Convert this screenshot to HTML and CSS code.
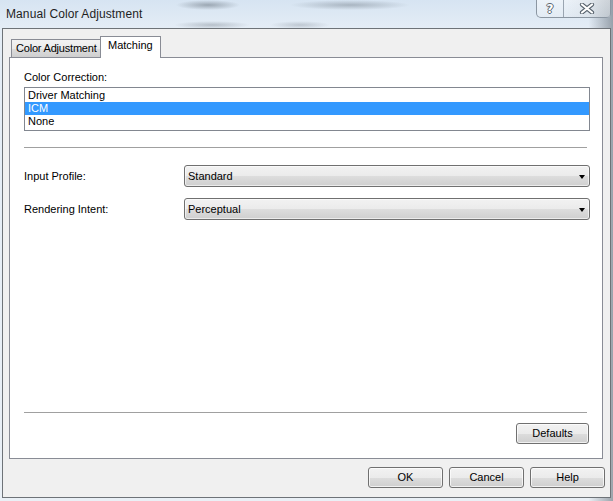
FILE: index.html
```html
<!DOCTYPE html>
<html>
<head>
<meta charset="utf-8">
<link rel="stylesheet" href="styles.css">
</head>
<body>
<div class="window">
  <div class="titlebar">
    <span class="title">Manual Color Adjustment</span>
    <div class="caption-buttons">
      <div class="cap cap-help"><span class="qmark">?</span></div>
      <div class="cap cap-close">
        <svg width="16" height="11" viewBox="0 0 16 11">
          <path d="M3 1.5 L13 9.5 M13 1.5 L3 9.5" stroke="#55606b" stroke-width="4.2" stroke-linecap="round"/>
          <path d="M3 1.5 L13 9.5 M13 1.5 L3 9.5" stroke="#ffffff" stroke-width="2.2" stroke-linecap="round"/>
        </svg>
      </div>
    </div>
  </div>
  <div class="client">
    <div class="tabs">
      <div class="tab">Color Adjustment</div>
      <div class="tab tab-active">Matching</div>
    </div>
    <div class="panel">
      <div class="label">Color Correction:</div>
      <div class="listbox">
        <div class="item">Driver Matching</div>
        <div class="item item-selected">ICM</div>
        <div class="item">None</div>
      </div>
      <div class="sep sep-top"></div>
      <div class="row row-first">
        <span class="row-label">Input Profile:</span>
        <div class="combo"><span class="combo-text">Standard</span><span class="arrow"></span></div>
      </div>
      <div class="row row-second">
        <span class="row-label">Rendering Intent:</span>
        <div class="combo"><span class="combo-text">Perceptual</span><span class="arrow"></span></div>
      </div>
      <div class="spacer"></div>
      <div class="sep sep-bottom"></div>
      <div class="defaults-row">
        <div class="btn btn-defaults">Defaults</div>
      </div>
    </div>
    <div class="footer">
      <div class="btn btn-ok">OK</div>
      <div class="btn btn-cancel">Cancel</div>
      <div class="btn btn-help">Help</div>
    </div>
  </div>
</div>
</body>
</html>
```

FILE: styles.css
```css
html, body {
  margin: 0;
  padding: 0;
}
body {
  width: 613px;
  height: 501px;
  overflow: hidden;
  font-family: "Liberation Sans", Arial, sans-serif;
  font-size: 11px;
  color: #000;
}
.window {
  width: 613px;
  height: 501px;
  box-sizing: border-box;
  display: flex;
  flex-direction: column;
  padding: 0 2px 3px 2px;
  background-color: #e3ebf3;
  background-image:
    radial-gradient(ellipse 32px 5px at 208px 5px, rgba(80,90,100,0.45), rgba(80,90,100,0) 100%),
    radial-gradient(ellipse 60px 5px at 350px 5px, rgba(80,90,100,0.35), rgba(80,90,100,0) 100%),
    radial-gradient(ellipse 38px 4px at 212px 25px, rgba(80,90,100,0.3), rgba(80,90,100,0) 100%),
    radial-gradient(ellipse 30px 4px at 300px 25px, rgba(80,90,100,0.25), rgba(80,90,100,0) 100%),
    linear-gradient(to right, rgba(0,0,0,0) 0%, rgba(0,0,0,0) 96%, rgba(60,70,80,0.45) 100%),
    linear-gradient(to bottom, #d6e4f2 0px, #e4edf6 28px, #eaf0f6 100%);
}
.titlebar {
  height: 28px;
  flex: none;
  display: flex;
  align-items: flex-start;
  justify-content: space-between;
}
.title {
  font-family: "Liberation Sans", Arial, sans-serif;
  font-size: 12px;
  line-height: 28px;
  padding-left: 4px;
  color: #1e1e1e;
  letter-spacing: 0.1px;
}
.caption-buttons {
  display: flex;
  height: 18px;
  box-sizing: border-box;
  border: 1px solid #8b96a2;
  border-top: none;
  border-radius: 0 0 5px 5px;
  background: linear-gradient(to bottom, rgba(255,255,255,0.55), rgba(235,240,245,0.35));
}
.cap {
  display: flex;
  align-items: center;
  justify-content: center;
}
.cap-help {
  width: 26px;
  border-right: 1px solid #9aa5b1;
}
.cap-close {
  width: 46px;
  background: linear-gradient(to right, rgba(255,255,255,0), rgba(200,206,212,0.5));
}
.qmark {
  font-family: "DejaVu Sans", sans-serif;
  font-weight: bold;
  font-size: 12px;
  line-height: 14px;
  color: #ffffff;
  text-shadow: 1px 0 0 #5a646e, -1px 0 0 #5a646e, 0 1px 0 #5a646e, 0 -1px 0 #5a646e;
}
.client {
  flex: 1;
  display: flex;
  flex-direction: column;
  background: #f0f0f0;
  border: 1px solid #6e7378;
}
.tabs {
  display: flex;
  align-items: flex-end;
  padding: 7px 0 0 8px;
  height: 21px;
  box-sizing: content-box;
}
.tab {
  box-sizing: border-box;
  height: 18px;
  padding: 0 0 0 4px;
  line-height: 17px;
  white-space: nowrap;
  overflow: hidden;
  border: 1px solid #898c95;
  border-bottom: none;
  border-right: none;
  background: linear-gradient(to bottom, #f2f2f2 0%, #ebebeb 50%, #dddddd 51%, #cfcfcf 100%);
  width: 89px;
  letter-spacing: -0.2px;
}
.tab-active {
  width: 61px;
  height: 22px;
  line-height: 17px;
  padding: 0 0 0 7px;
  border-right: 1px solid #898c95;
  background: #ffffff;
  margin-bottom: -1px;
  position: relative;
  z-index: 1;
  letter-spacing: 0;
}
.panel {
  margin: 0 7px 0 6px;
  width: 594px;
  height: 402px;
  box-sizing: border-box;
  border: 1px solid #898c95;
  background: #ffffff;
  display: flex;
  flex-direction: column;
  padding: 13px 12px 14px 14px;
}
.label {
  line-height: 13px;
}
.listbox {
  margin-top: 3px;
  height: 44px;
  box-sizing: border-box;
  border: 1px solid #828790;
  padding: 1px 0 2px 0;
}
.item {
  line-height: 13px;
  height: 13px;
  padding-left: 3px;
}
.item-selected {
  background: #3399ff;
  color: #ffffff;
}
.sep {
  height: 1px;
  background: #a0a0a0;
  margin-right: 3px;
}
.sep-top {
  margin-top: 16px;
}
.row {
  display: flex;
  align-items: center;
}
.row-first {
  margin-top: 17px;
}
.row-second {
  margin-top: 11px;
}
.row-label {
  width: 160px;
}
.combo {
  flex: 1;
  height: 22px;
  box-sizing: border-box;
  border: 1px solid #707070;
  border-radius: 3px;
  background: linear-gradient(to bottom, #f2f2f2 0%, #ebebeb 50%, #dddddd 51%, #cfcfcf 100%);
  display: flex;
  align-items: center;
  justify-content: space-between;
  padding: 0 4px 0 3px;
  box-shadow: inset 0 0 0 1px rgba(255,255,255,0.6);
}
.arrow {
  width: 0;
  height: 0;
  border-left: 3.5px solid transparent;
  border-right: 3.5px solid transparent;
  border-top: 4px solid #000;
  margin-top: 1px;
}
.spacer {
  flex: 1;
}
.defaults-row {
  display: flex;
  justify-content: flex-end;
  margin-top: 10px;
  padding-right: 1px;
}
.btn {
  height: 21px;
  box-sizing: border-box;
  border: 1px solid #707070;
  border-radius: 3px;
  background: linear-gradient(to bottom, #f2f2f2 0%, #ebebeb 50%, #dddddd 51%, #cfcfcf 100%);
  box-shadow: inset 0 0 0 1px rgba(255,255,255,0.7);
  display: flex;
  align-items: center;
  justify-content: center;
  line-height: 13px;
}
.btn-defaults {
  width: 73px;
}
.footer {
  display: flex;
  justify-content: flex-end;
  gap: 6px;
  margin-top: 8px;
  padding-right: 5px;
}
.btn-ok, .btn-cancel, .btn-help {
  width: 75px;
}
```
